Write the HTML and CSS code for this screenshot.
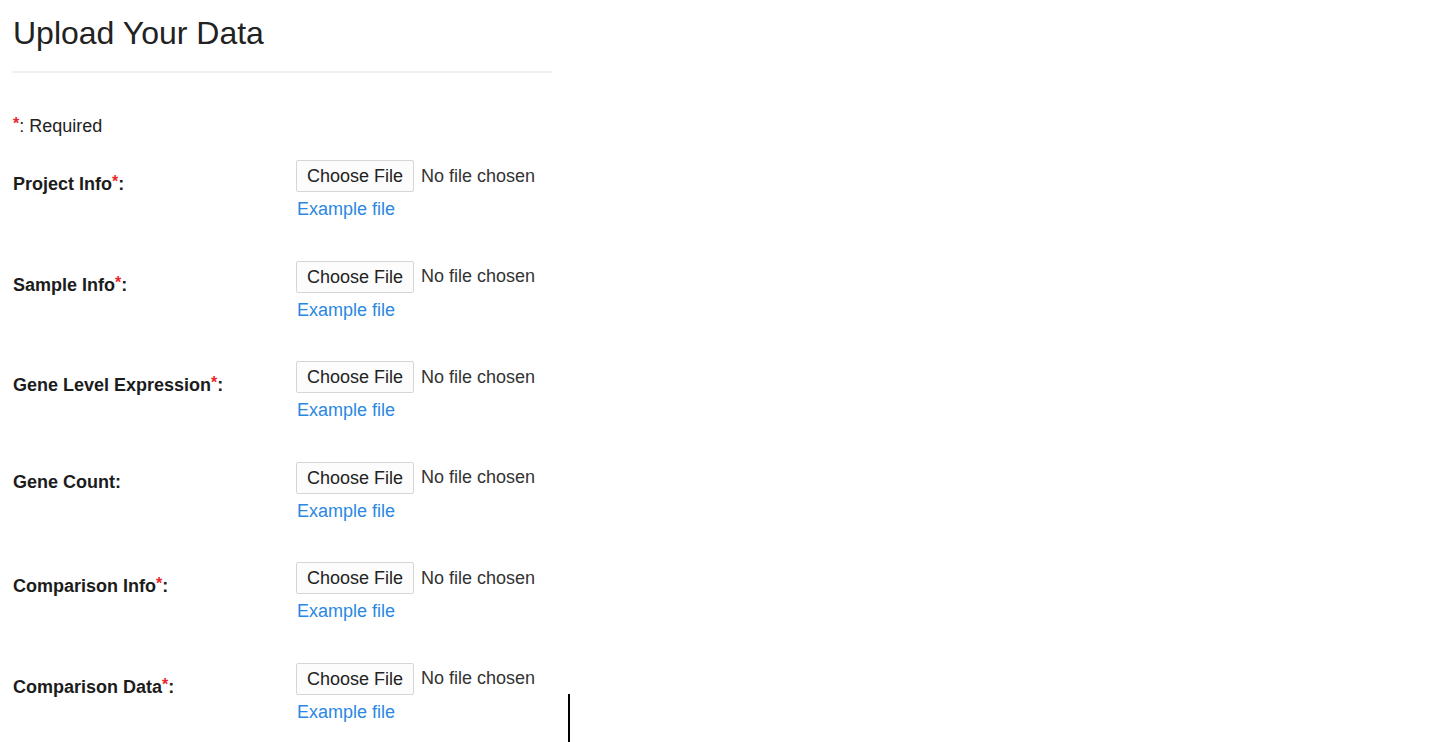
FILE: index.html
```html
<!DOCTYPE html>
<html lang="en">
<head>
<meta charset="utf-8">
<title>Upload Your Data</title>
<link rel="stylesheet" href="styles.css">
</head>
<body>
<div class="page">
  <h2 class="title">Upload Your Data</h2>
  <div class="rule"></div>
  <p class="note"><span class="req">*</span>: Required</p>
  <div class="form">
    <div class="row">
      <div class="label">Project Info<sup class="req">*</sup>:</div>
      <div class="field">
        <div class="file"><span class="btn">Choose File</span><span class="none">No file chosen</span></div>
        <a class="example" href="#">Example file</a>
      </div>
    </div>
    <div class="row">
      <div class="label">Sample Info<sup class="req">*</sup>:</div>
      <div class="field">
        <div class="file"><span class="btn">Choose File</span><span class="none">No file chosen</span></div>
        <a class="example" href="#">Example file</a>
      </div>
    </div>
    <div class="row">
      <div class="label">Gene Level Expression<sup class="req">*</sup>:</div>
      <div class="field">
        <div class="file"><span class="btn">Choose File</span><span class="none">No file chosen</span></div>
        <a class="example" href="#">Example file</a>
      </div>
    </div>
    <div class="row">
      <div class="label optional">Gene Count:</div>
      <div class="field">
        <div class="file"><span class="btn">Choose File</span><span class="none">No file chosen</span></div>
        <a class="example" href="#">Example file</a>
      </div>
    </div>
    <div class="row">
      <div class="label">Comparison Info<sup class="req">*</sup>:</div>
      <div class="field">
        <div class="file"><span class="btn">Choose File</span><span class="none">No file chosen</span></div>
        <a class="example" href="#">Example file</a>
      </div>
    </div>
    <div class="row">
      <div class="label">Comparison Data<sup class="req">*</sup>:</div>
      <div class="field">
        <div class="file"><span class="btn">Choose File</span><span class="none">No file chosen</span></div>
        <a class="example" href="#">Example file</a>
      </div>
    </div>
  </div>
</div>
<div class="cursor"></div>
</body>
</html>
```
FILE: styles.css
```css
html, body {
  margin: 0;
  padding: 0;
  background: #ffffff;
}
body {
  font-family: "Liberation Sans", Arial, Helvetica, sans-serif;
  color: #333333;
  font-size: 18px;
  overflow: hidden;
  height: 742px;
  position: relative;
}
.page {
  padding-left: 12px;
  width: 540px;
}
.title {
  margin: 16px 0 0 1px;
  font-size: 32px;
  line-height: 34px;
  font-weight: normal;
  color: #222222;
}
.rule {
  margin-top: 21px;
  height: 2px;
  background: #f0f0f0;
}
.note {
  margin: 40px 0 0 1px;
  line-height: 22px;
  font-size: 18px;
  color: #222222;
}
.req {
  color: #e8262b;
  font-weight: bold;
}
sup.req {
  font-size: 16px;
  line-height: 0;
  vertical-align: 3px;
}
.note .req {
  font-size: 16px;
  vertical-align: 3px;
}
.form {
  margin-top: 23px;
  display: flex;
  flex-direction: column;
  gap: 40.6px;
}
.row {
  display: flex;
  align-items: flex-start;
  height: 60px;
}
.label {
  width: 283px;
  padding-left: 1px;
  padding-top: 13px;
  font-weight: bold;
  font-size: 18px;
  line-height: 22px;
  color: #1c1c1c;
}
.label.optional {
  padding-top: 9px;
}
.field {
  display: flex;
  flex-direction: column;
  align-items: flex-start;
}
.file {
  display: flex;
  align-items: center;
  gap: 7px;
}
.btn {
  display: block;
  box-sizing: border-box;
  height: 32px;
  padding: 0 10px;
  line-height: 30px;
  border: 1px solid #d6d6d6;
  border-radius: 2px;
  background: #fcfcfc;
  color: #222222;
  font-size: 18px;
}
.none {
  font-size: 18px;
  color: #333333;
}
.example {
  margin-top: 6px;
  margin-left: 1px;
  line-height: 22px;
  font-size: 18px;
  color: #2a88e2;
  text-decoration: none;
}
.cursor {
  position: absolute;
  left: 568px;
  top: 694px;
  width: 2px;
  height: 48px;
  background: #000000;
}
```
